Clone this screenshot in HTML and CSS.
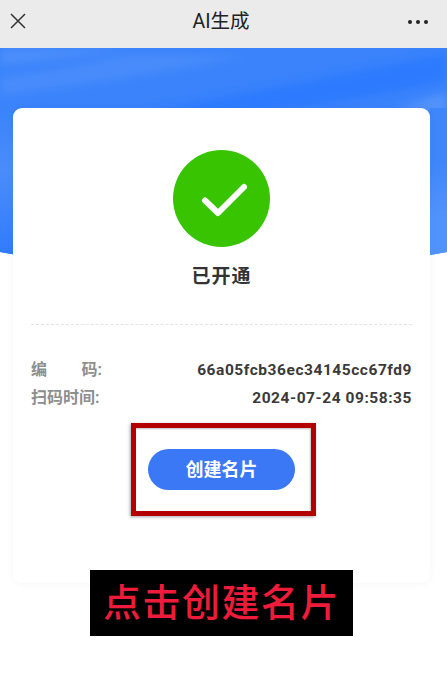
FILE: index.html
```html
<!DOCTYPE html>
<html lang="zh-CN">
<head>
<meta charset="utf-8">
<title>AI生成</title>
<link rel="stylesheet" href="styles.css">
</head>
<body>
<div class="page">
  <header class="topbar">
    <svg class="close-icon" width="18" height="18" viewBox="0 0 18 18"><path d="M2 2 L16 16 M16 2 L2 16" fill="none" stroke="#333" stroke-width="1.5"/></svg>
    <h1 class="topbar-title">AI生成</h1>
    <svg class="more-icon" width="22" height="6" viewBox="0 0 22 6"><circle cx="3" cy="3" r="2" fill="#222"/><circle cx="11" cy="3" r="2" fill="#222"/><circle cx="19" cy="3" r="2" fill="#222"/></svg>
  </header>
  <main class="main">
    <svg class="hero" width="447" height="210" viewBox="0 0 447 210" preserveAspectRatio="none">
      <defs>
        <filter id="soft" x="-20%" y="-50%" width="140%" height="200%"><feGaussianBlur stdDeviation="5"/></filter>
        <clipPath id="heroClip"><path d="M0 0 H447 V204 Q223 245 0 204 Z"/></clipPath>
        <linearGradient id="leftEdge" x1="0" y1="0" x2="0" y2="1">
          <stop offset="0" stop-color="#3a83fb"/>
          <stop offset="0.4" stop-color="#4a8cfb"/>
          <stop offset="0.75" stop-color="#3a82fb"/>
          <stop offset="1" stop-color="#2e7afb"/>
        </linearGradient>
        <linearGradient id="rightEdge" x1="0" y1="0" x2="0" y2="1">
          <stop offset="0" stop-color="#3f86fb"/>
          <stop offset="0.35" stop-color="#3f86fb"/>
          <stop offset="0.7" stop-color="#5193fc"/>
          <stop offset="1" stop-color="#5193fc"/>
        </linearGradient>
      </defs>
      <g clip-path="url(#heroClip)">
        <rect width="447" height="210" fill="#3a83fb"/>
        <path d="M0 18 Q70 12 130 0 H0 Z" fill="#6ca2fc" opacity="0.35" filter="url(#soft)"/>
        <path d="M0 48 Q110 35 250 8 L130 5 Q60 22 0 28 Z" fill="#5e99fc" opacity="0.4" filter="url(#soft)"/>
        <path d="M150 62 Q280 40 447 5 V32 Q330 60 230 65 Z" fill="#2b78ff" opacity="0.8" filter="url(#soft)"/>
        <path d="M395 62 Q425 50 447 44 V66 Z" fill="#659dfc" opacity="0.6" filter="url(#soft)"/>
        <rect x="0" y="60" width="13" height="155" fill="url(#leftEdge)"/>
        <rect x="430" y="60" width="17" height="155" fill="url(#rightEdge)"/>
      </g>
    </svg>
    <section class="card">
      <div class="status-circle">
        <svg width="50" height="38" viewBox="0 0 50 38"><path d="M8 20.5 L21 33 L47 7" fill="none" stroke="#fff" stroke-width="6" stroke-linecap="round" stroke-linejoin="round"/></svg>
      </div>
      <h2 class="status-text">已开通</h2>
      <div class="divider"></div>
      <dl class="details">
        <div class="row">
          <dt class="label label-spread"><span>编</span><span>码:</span></dt>
          <dd class="value">66a05fcb36ec34145cc67fd9</dd>
        </div>
        <div class="row">
          <dt class="label">扫码时间:</dt>
          <dd class="value">2024-07-24 09:58:35</dd>
        </div>
      </dl>
      <button class="create-btn" type="button">创建名片</button>
    </section>
    <div class="highlight-box"></div>
    <div class="caption">点击创建名片</div>
  </main>
</div>
</body>
</html>
```

FILE: styles.css
```css
* { box-sizing: border-box; }
html, body { margin: 0; padding: 0; background: #fff; }
body {
  font-family: Roboto, "Noto Sans CJK SC", sans-serif;
  width: 447px;
  height: 687px;
  overflow: hidden;
}
.page { width: 447px; height: 687px; display: flex; flex-direction: column; }
.topbar {
  height: 48px;
  flex: none;
  background: #ebebeb;
  display: flex;
  align-items: center;
  justify-content: space-between;
  padding: 0 18px 5px 9px;
  position: relative;
}
.close-icon { display: block; margin-top: -1px; }
.more-icon { display: block; margin-top: 0; }
.topbar-title {
  position: absolute;
  left: 0;
  right: 5px;
  top: 9px;
  margin: 0;
  text-align: center;
  font-size: 19.5px;
  line-height: 26px;
  font-weight: 400;
  color: #222;
}
.main { position: relative; flex: 1; padding: 60px 17px 0 13px; }
.hero { position: absolute; left: 0; top: 0; display: block; }
.card {
  position: relative;
  width: 417px;
  height: 475px;
  background: #fff;
  border-radius: 9px;
  box-shadow: 0 1px 8px rgba(0, 0, 0, 0.04);
  padding: 42px 18px 0;
  display: flex;
  flex-direction: column;
  align-items: center;
}
.status-circle {
  width: 97px;
  height: 97px;
  border-radius: 50%;
  background: #38c400;
  display: flex;
  align-items: center;
  justify-content: center;
  flex: none;
}
.status-text {
  margin: 16px 0 0;
  font-size: 19px;
  line-height: 28px;
  font-weight: 700;
  color: #333;
  letter-spacing: 1px;
}
.divider {
  width: 381px;
  height: 0;
  margin-top: 33px;
  border-top: 1px dashed #e4e4e4;
}
.details { width: 381px; margin: 35px 0 0; display: flex; flex-direction: column; gap: 8px; }
.row { display: flex; justify-content: space-between; align-items: center; height: 20px; }
.label {
  font-size: 16px;
  line-height: 20px;
  font-weight: 700;
  color: #8e8e8e;
  width: 71px;
  white-space: nowrap;
}
.label-spread { display: flex; justify-content: space-between; }
.value {
  margin: 0;
  font-size: 15.5px;
  line-height: 20px;
  font-weight: 700;
  color: #3a3a3a;
  letter-spacing: 0.55px;
  white-space: nowrap;
}
.create-btn {
  width: 147px;
  height: 41px;
  margin-top: 41px;
  flex: none;
  border: 0;
  padding: 0;
  border-radius: 21px;
  background: #3b78f5;
  color: #fff;
  font-family: inherit;
  font-size: 18px;
  line-height: 40px;
  font-weight: 700;
}
.highlight-box {
  position: absolute;
  left: 131px;
  top: 375px;
  width: 185px;
  height: 93px;
  border: 5px solid #b30000;
  box-shadow: -1px 1px 3px rgba(0, 0, 0, 0.35), inset -1px 1px 2px rgba(0, 0, 0, 0.25);
}
.caption {
  position: absolute;
  left: 90px;
  top: 522px;
  width: 263px;
  height: 66px;
  background: #000;
  color: #ee1c3a;
  font-size: 38px;
  line-height: 66px;
  letter-spacing: 1.5px;
  text-align: center;
  font-weight: 500;
  white-space: nowrap;
}
```
